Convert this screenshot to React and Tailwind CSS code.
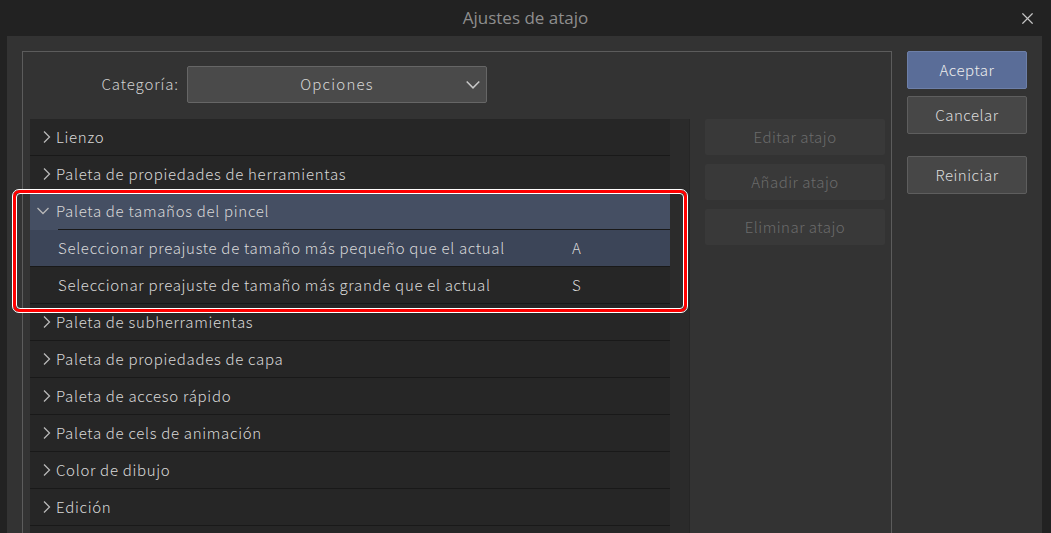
import { X } from 'lucide-react';

const FONT = { fontFamily: '"Noto Sans CJK JP", "Noto Sans", sans-serif' };

const ROWS_AFTER = [
  'Paleta de subherramientas',
  'Paleta de propiedades de capa',
  'Paleta de acceso rápido',
  'Paleta de cels de animación',
  'Color de dibujo',
  'Edición',
];

function ChevronRight() {
  return (
    <svg width="14" height="16" viewBox="0 0 14 16" className="shrink-0">
      <polyline points="4,2.5 9.5,8 4,13.5" fill="none" stroke="#b8b8b8" strokeWidth="1.3" />
    </svg>
  );
}

function ChevronDown({ color = '#b8b8b8', size = 14 }) {
  return (
    <svg width={size} height={size} viewBox="0 0 14 14" className="shrink-0">
      <polyline points="1.5,4 7,9.5 12.5,4" fill="none" stroke={color} strokeWidth="1.3" />
    </svg>
  );
}

function GroupRow({ label }) {
  return (
    <div className="h-[37px] shrink-0 flex items-center pl-[10px] gap-[2px] bg-[#262626] border-b border-[#191919] text-[15px] font-light text-[#d8d8d8] tracking-[0.7px]">
      <ChevronRight />
      <span>{label}</span>
    </div>
  );
}

function SubRow({ label, keyName, selected }) {
  return (
    <div className={`h-[37px] shrink-0 flex items-center pl-[28px] border-b border-[#191919] text-[15px] font-light text-[#d8d8d8] tracking-[0.7px] ${selected ? 'bg-[#3c4558]' : 'bg-[#262626]'}`}>
      <span className="w-[514px]">{label}</span>
      <span>{keyName}</span>
    </div>
  );
}

function SideButton({ children }) {
  return (
    <div className="h-[36px] flex items-center justify-center bg-[#393939] rounded-[2px] text-[15px] font-light text-[#6b6b6b] tracking-[0.5px]">
      {children}
    </div>
  );
}

export default function App() {
  return (
    <div className="w-[1051px] h-[533px] bg-[#222222] overflow-hidden flex flex-col relative" style={FONT}>
      {/* title bar */}
      <div className="h-[36px] shrink-0 flex items-center justify-center relative">
        <span className="text-[17px] text-[#8e8e8e]" style={{ fontFamily: '"Open Sans", "Noto Sans", sans-serif' }}>Ajustes de atajo</span>
        <X className="absolute right-[14px] top-[9px]" size={19} strokeWidth={1.5} color="#c4c4c4" />
      </div>

      {/* dialog body */}
      <div className="ml-[7px] w-[1035px] flex-1 bg-[#333333] flex pt-[15px] pl-[15px] gap-[15px] min-h-0">
        {/* group box */}
        <div className="w-[870px] border-l border-t border-r border-[#5c5c5c] flex flex-col min-h-0">
          <div className="h-[52px] shrink-0 flex items-start pt-[14px]">
            <div className="w-[164px] h-[37px] flex items-center justify-end pr-[8px] text-[15px] font-light text-[#d0d0d0] tracking-[0.9px]">Categoría:</div>
            <div className="w-[300px] h-[37px] bg-[#4a4a4a] border border-[#666666] rounded-[2px] flex items-center relative">
              <span className="flex-1 text-center text-[15px] font-light text-[#d6d6d6] tracking-[1.2px]">Opciones</span>
              <div className="absolute right-[5px] top-[10px]"><ChevronDown color="#c8c8c8" size={16} /></div>
            </div>
          </div>

          <div className="flex flex-1 min-h-0 pl-[7px] pt-[15px]">
            {/* list */}
            <div className="w-[660px] flex bg-[#2b2b2b] overflow-hidden">
              <div className="w-[640px] flex flex-col">
                <GroupRow label="Lienzo" />
                <GroupRow label="Paleta de propiedades de herramientas" />
                <div className="h-[36px] shrink-0 flex items-center pl-[6px] gap-[6px] bg-[#454f63] text-[15px] font-light text-[#d8d8d8] tracking-[0.7px]">
                  <ChevronDown />
                  <span>Paleta de tamaños del pincel</span>
                </div>
                <div className="h-px shrink-0 bg-[#454f63] flex">
                  <div className="ml-[28px] flex-1 bg-[#191919]" />
                </div>
                <SubRow label="Seleccionar preajuste de tamaño más pequeño que el actual" keyName="A" selected />
                <SubRow label="Seleccionar preajuste de tamaño más grande que el actual" keyName="S" />
                {ROWS_AFTER.map(r => <GroupRow key={r} label={r} />)}
                <div className="h-[37px] shrink-0 bg-[#262626]" />
              </div>
              <div className="w-[20px] border-r border-[#262626]" />
            </div>

            {/* middle buttons */}
            <div className="w-[180px] ml-[15px] flex flex-col gap-[9px]">
              <SideButton>Editar atajo</SideButton>
              <SideButton>Añadir atajo</SideButton>
              <SideButton>Eliminar atajo</SideButton>
            </div>
          </div>
        </div>

        {/* right buttons */}
        <div className="w-[120px] flex flex-col">
          <div className="h-[38px] flex items-center justify-center bg-[#5a6d98] border border-[#6d7fa8] rounded-[2px] text-[15px] font-light text-[#eeeeee] tracking-[0.5px]">Aceptar</div>
          <div className="mt-[7px] h-[38px] flex items-center justify-center bg-[#474747] border border-[#5e5e5e] rounded-[2px] text-[15px] font-light text-[#dcdcdc] tracking-[0.5px]">Cancelar</div>
          <div className="mt-[22px] h-[38px] flex items-center justify-center bg-[#474747] border border-[#5e5e5e] rounded-[2px] text-[15px] font-light text-[#dcdcdc] tracking-[0.5px]">Reiniciar</div>
        </div>
      </div>

      {/* highlight box */}
      <div className="absolute left-[13px] top-[190px] w-[674px] h-[122px] rounded-[6px] border-[3px] border-[#ff0000] outline outline-1 outline-white pointer-events-none">
        <div className="w-full h-full rounded-[4px] border border-white" />
      </div>
    </div>
  );
}
